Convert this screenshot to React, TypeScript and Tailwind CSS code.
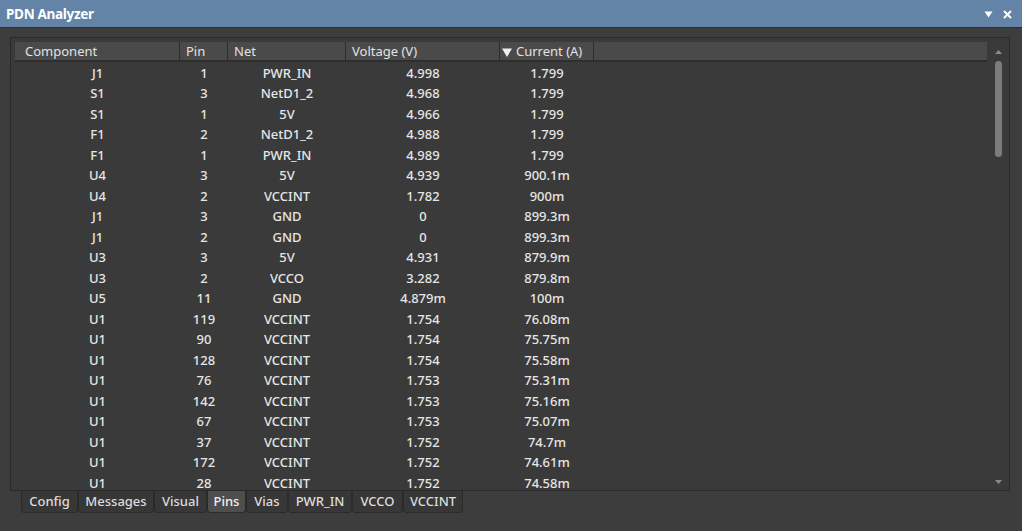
import React from "react";

const rows: [string, string, string, string, string][] = [
  ["J1", "1", "PWR_IN", "4.998", "1.799"],
  ["S1", "3", "NetD1_2", "4.968", "1.799"],
  ["S1", "1", "5V", "4.966", "1.799"],
  ["F1", "2", "NetD1_2", "4.988", "1.799"],
  ["F1", "1", "PWR_IN", "4.989", "1.799"],
  ["U4", "3", "5V", "4.939", "900.1m"],
  ["U4", "2", "VCCINT", "1.782", "900m"],
  ["J1", "3", "GND", "0", "899.3m"],
  ["J1", "2", "GND", "0", "899.3m"],
  ["U3", "3", "5V", "4.931", "879.9m"],
  ["U3", "2", "VCCO", "3.282", "879.8m"],
  ["U5", "11", "GND", "4.879m", "100m"],
  ["U1", "119", "VCCINT", "1.754", "76.08m"],
  ["U1", "90", "VCCINT", "1.754", "75.75m"],
  ["U1", "128", "VCCINT", "1.754", "75.58m"],
  ["U1", "76", "VCCINT", "1.753", "75.31m"],
  ["U1", "142", "VCCINT", "1.753", "75.16m"],
  ["U1", "67", "VCCINT", "1.753", "75.07m"],
  ["U1", "37", "VCCINT", "1.752", "74.7m"],
  ["U1", "172", "VCCINT", "1.752", "74.61m"],
  ["U1", "28", "VCCINT", "1.752", "74.58m"],
];

const widths = ["w-[165px]", "w-[48px]", "w-[118px]", "w-[154px]", "w-[94px]"];

const tabs = ["Config", "Messages", "Visual", "Pins", "Vias", "PWR_IN", "VCCO", "VCCINT"];
const tabW = ["w-[57px]", "w-[76px]", "w-[53px]", "w-[39px]", "w-[42px]", "w-[64px]", "w-[51px]", "w-[60px]"];

export default function App() {
  return (
    <div
      className="w-[1022px] h-[531px] bg-[#3d3d3d] flex flex-col overflow-hidden text-[#dcdcdc]"
      style={{ fontFamily: '"Noto Sans", "Open Sans", sans-serif' }}
    >
      {/* Title bar */}
      <div className="h-[28px] bg-[#6384a6] border-b border-[#2e2e2e] flex items-center justify-between pl-[6px] pr-[10px] shrink-0">
        <span className="text-white font-bold text-[13.5px] tracking-[-0.3px] pt-[2px]">PDN Analyzer</span>
        <div className="flex items-center gap-[10px] pt-[1px]">
          <svg width="9" height="7" viewBox="0 0 9 7">
            <path d="M0.5 0.5 L8.5 0.5 L4.5 6.5 Z" fill="#ffffff" />
          </svg>
          <svg width="9" height="9" viewBox="0 0 9 9">
            <path d="M1 1 L8 8 M8 1 L1 8" stroke="#ffffff" strokeWidth="2" />
          </svg>
        </div>
      </div>

      {/* Frame */}
      <div className="mt-[9px] ml-[10px] w-[1000px] h-[454px] border border-[#2a2a2a] bg-[#3a3a3a] pl-[4px] pt-[4px] flex shrink-0">
        <div className="w-[972px] flex flex-col overflow-hidden">
          {/* Header */}
          <div className="h-[20px] bg-[#4a4a4a] border-b-2 border-[#2e2e2e] flex items-center text-[13px] text-[#e2e2e2] shrink-0">
            <div className={`${widths[0]} h-full flex items-center pt-[2px] pl-[10px] border-r border-[#2e2e2e]`}>Component</div>
            <div className={`${widths[1]} h-full flex items-center pt-[2px] pl-[6px] border-r border-[#2e2e2e]`}>Pin</div>
            <div className={`${widths[2]} h-full flex items-center pt-[2px] pl-[6px] border-r border-[#2e2e2e]`}>Net</div>
            <div className={`${widths[3]} h-full flex items-center pt-[2px] pl-[6px] border-r border-[#2e2e2e]`}>Voltage (V)</div>
            <div className={`${widths[4]} h-full flex items-center pt-[2px] pl-[2px] border-r border-[#2e2e2e] gap-[4px]`}>
              <svg width="10" height="9" viewBox="0 0 10 9">
                <path d="M0 0.5 L10 0.5 L5 9 Z" fill="#f0f0f0" />
              </svg>
              <span>Current (A)</span>
            </div>
            <div className="flex-1 h-full" />
          </div>
          {/* Body */}
          <div className="flex-1 overflow-hidden pt-[1px] text-[13px] text-[#e6e6e6] font-medium">
            {rows.map((r, i) => (
              <div key={i} className="h-[20.5px] flex items-center">
                {r.map((c, j) => (
                  <div key={j} className={`${widths[j]} text-center`}>
                    {c}
                  </div>
                ))}
              </div>
            ))}
          </div>
        </div>
        {/* Scrollbar */}
        <div className="w-[22px] flex flex-col items-center pt-[8px] pb-[6px]">
          <svg width="7" height="4" viewBox="0 0 7 4">
            <path d="M0 4 L3.5 0 L7 4 Z" fill="#8a8a8a" />
          </svg>
          <div className="mt-[7px] w-[7px] h-[96px] rounded-full bg-[#7c7c7c]" />
          <div className="flex-1" />
          <svg width="7" height="4" viewBox="0 0 7 4">
            <path d="M0 0 L7 0 L3.5 4 Z" fill="#8a8a8a" />
          </svg>
        </div>
      </div>

      {/* Tabs */}
      <div className="flex ml-[21px] shrink-0">
        {tabs.map((t, i) => (
          <div
            key={t}
            className={`${tabW[i]} h-[22px] flex items-center justify-center pt-[1px] text-[13px] font-medium border border-t-0 border-[#2a2a2a] rounded-b-[4px] ${
              t === "Pins" ? "bg-[#4e4e4e] text-[#f0f0f0]" : "bg-[#373737] text-[#dcdcdc]"
            }`}
          >
            {t}
          </div>
        ))}
      </div>
    </div>
  );
}
